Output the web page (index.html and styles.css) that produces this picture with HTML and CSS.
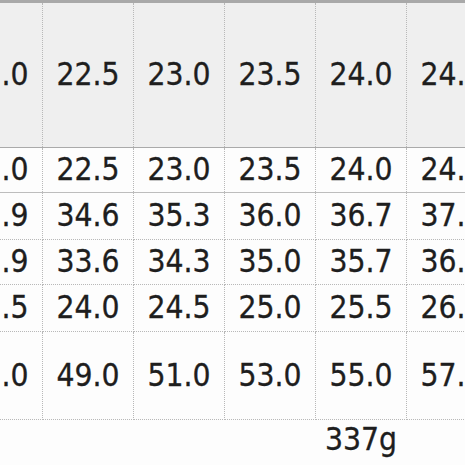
FILE: index.html
```html
<!DOCTYPE html>
<html>
<head>
<meta charset="utf-8">
<link rel="stylesheet" href="styles.css">
</head>
<body>
<div class="wrap">
<table class="size-table">
  <colgroup>
    <col class="c"><col class="c"><col class="c"><col class="c"><col class="c"><col class="c">
  </colgroup>
  <tr class="head">
    <td>22.0</td><td>22.5</td><td>23.0</td><td>23.5</td><td>24.0</td><td>24.5</td>
  </tr>
  <tr class="r1">
    <td>22.0</td><td>22.5</td><td>23.0</td><td>23.5</td><td>24.0</td><td>24.5</td>
  </tr>
  <tr class="r2">
    <td>33.9</td><td>34.6</td><td>35.3</td><td>36.0</td><td>36.7</td><td>37.4</td>
  </tr>
  <tr class="r3">
    <td>32.9</td><td>33.6</td><td>34.3</td><td>35.0</td><td>35.7</td><td>36.4</td>
  </tr>
  <tr class="r4">
    <td>23.5</td><td>24.0</td><td>24.5</td><td>25.0</td><td>25.5</td><td>26.0</td>
  </tr>
  <tr class="r5">
    <td>47.0</td><td>49.0</td><td>51.0</td><td>53.0</td><td>55.0</td><td>57.0</td>
  </tr>
  <tr class="foot">
    <td></td><td></td><td></td><td></td><td>337g</td><td></td>
  </tr>
</table>
</div>
</body>
</html>
```
FILE: styles.css
```css
html, body {
  margin: 0;
  padding: 0;
  background: #fdfdfd;
}
.wrap {
  width: 465px;
  height: 465px;
  overflow: hidden;
}
.size-table {
  border-collapse: collapse;
  table-layout: fixed;
  margin-left: -49px;
  width: 546px;
  border-top: 3px solid #a9a9a9;
  font-family: "DejaVu Sans Condensed", "DejaVu Sans", sans-serif;
  font-stretch: condensed;
  font-size: 31.5px;
  color: #1e1e1e;
  -webkit-text-stroke: 0.3px #1e1e1e;
}
.c { width: 91px; }
.size-table td {
  padding: 0;
  text-align: center;
  vertical-align: middle;
  border-left: 1px dotted #b8b8b8;
  border-right: 1px dotted #b8b8b8;
  border-bottom: 1px dotted #b8b8b8;
  line-height: 1;
  background: #fdfdfd;
}
.head td {
  background: #efefef;
  height: 144px;
  border-bottom: 1px solid #aaaaaa;
}
.r1 td { height: 44px; border-bottom: 1px solid #bdbdbd; }
.r2 td { height: 46px; }
.r3 td { height: 44px; }
.r4 td { height: 46px; }
.r5 td { height: 87px; }
.foot td {
  border: none;
  height: 45px;
  vertical-align: top;
  padding-top: 4px;
}
```
